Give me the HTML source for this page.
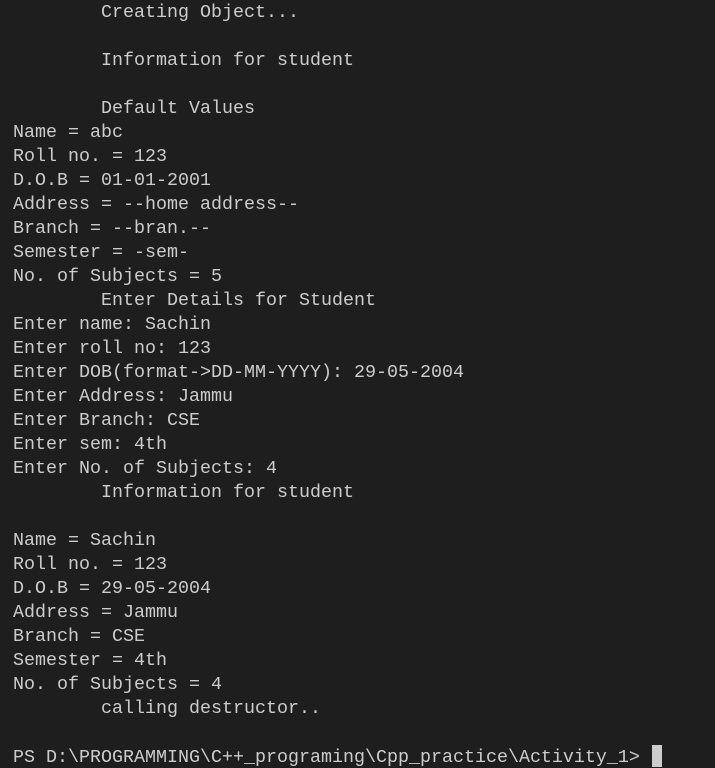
<!DOCTYPE html>
<html><head><style>
html,body{margin:0;padding:0;background:#1e1e1e;width:715px;height:768px;overflow:hidden}
pre{margin:0;padding:1px 0 0 13px;font-family:"Liberation Mono",monospace;font-size:18.33px;line-height:24px;color:#cccccc;white-space:pre}
.c{display:inline-block;width:10px;height:22px;background:#cccccc;vertical-align:-5px;margin-left:1px}
</style></head><body><pre>        Creating Object...

        Information for student

        Default Values
Name = abc
Roll no. = 123
D.O.B = 01-01-2001
Address = --home address--
Branch = --bran.--
Semester = -sem-
No. of Subjects = 5
        Enter Details for Student
Enter name: Sachin
Enter roll no: 123
Enter DOB(format-&gt;DD-MM-YYYY): 29-05-2004
Enter Address: Jammu
Enter Branch: CSE
Enter sem: 4th
Enter No. of Subjects: 4
        Information for student

Name = Sachin
Roll no. = 123
D.O.B = 29-05-2004
Address = Jammu
Branch = CSE
Semester = 4th
No. of Subjects = 4
        calling destructor..

PS D:\PROGRAMMING\C++_programing\Cpp_practice\Activity_1&gt; <span class="c"></span></pre></body></html>
